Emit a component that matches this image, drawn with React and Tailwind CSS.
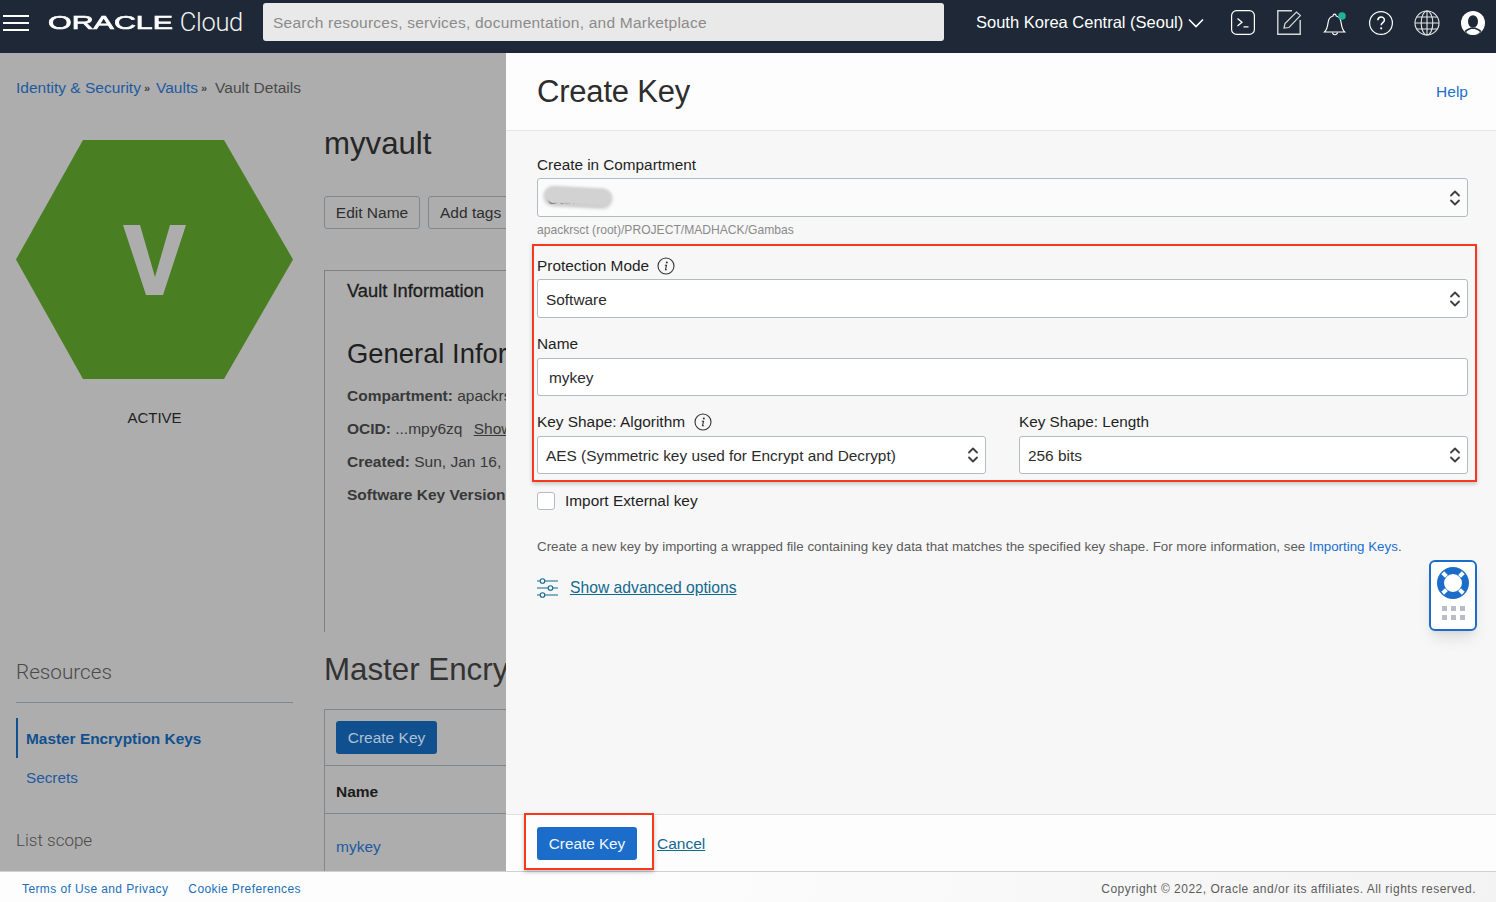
import React from 'react';

const Chevrons = () => (
    <svg width="12" height="18" viewBox="0 0 12 18" fill="none" stroke="#3f3f3f" strokeWidth="1.8" strokeLinecap="round" strokeLinejoin="round">
        <path d="M2 6.500 6 2.500l4 4" />
        <path d="M2 11.500l4 4 4-4" />
    </svg>
);

const InfoIcon = () => (
    <svg width="18" height="18" viewBox="0 0 18 18" fill="none">
        <circle cx="9" cy="9" r="8" stroke="#333" strokeWidth="1.100" />
        <circle cx="9.800" cy="5.400" r="1" fill="#333" />
        <path d="M7.800 8.200h1.700l-1 4.500h1.400" stroke="#333" strokeWidth="1.100" fill="none" />
    </svg>
);

const SelectBox = ({ children, className = '' }) => (
    <div className={`flex items-center justify-between rounded-[3px] border border-[#b5b9c2] bg-white pl-2 pr-[6px] text-[15.400px] text-[#2c2c2c] ${className}`}>
        <span className="pt-[2px]">{children}</span>
        <Chevrons />
    </div>
);

const HeaderIcons = () => (
    <div className="flex items-center gap-[22px] text-white">
        <svg width="24" height="25" viewBox="0 0 24 25" fill="none" stroke="currentColor">
            <rect x="0.600" y="0.600" width="22.800" height="23.800" rx="5" strokeWidth="1.200" />
            <path d="M6.500 8.500l4.500 3.800-4.500 3.800M12.500 16.900h5" strokeWidth="1.300" />
        </svg>
        <svg width="24" height="25" viewBox="0 0 24 25" fill="none" stroke="#d8d8d8">
            <path d="M15 0.800H0.800v23.400h22.400V10" strokeWidth="1.400" />
            <path d="M7 18l1-4.500L19.500 2l4 3.500L12 17.500l-5 .5z" strokeWidth="1.200" fill="#1e2836" />
        </svg>
        <svg width="24" height="26" viewBox="0 0 24 26" fill="none" stroke="currentColor">
            <path d="M1.500 22c2.500-2.500 3-5 3.500-9 .4-4 3-6.500 5-7 .2-2.500 3-2.500 3.200 0 2 .5 4.500 3 5 7 .5 4 1 6.500 3.500 9z" strokeWidth="1.200" />
            <path d="M9.500 22.500c.3 3 4.500 3 5 0" strokeWidth="1.200" />
            <circle cx="19" cy="6" r="3.800" fill="#1db299" stroke="none" />
        </svg>
        <svg width="24" height="24" viewBox="0 0 24 24" fill="none" stroke="currentColor">
            <circle cx="12" cy="12" r="11.400" strokeWidth="1.200" />
            <path d="M8.800 9.300c.2-4.300 6.600-4.300 6.600-.3 0 2.700-3.200 2.600-3.200 5.300" strokeWidth="1.500" />
            <circle cx="12.200" cy="17.300" r="1.100" fill="currentColor" stroke="none" />
        </svg>
        <svg width="26" height="26" viewBox="0 0 26 26" fill="none" stroke="#e5e5e5" strokeWidth="1.100" className="-mx-px">
            <circle cx="13" cy="13" r="12" />
            <ellipse cx="13" cy="13" rx="5.800" ry="12" />
            <path d="M13 1v24M1 13h24M2.800 7h20.400M2.800 19h20.400" />
        </svg>
        <svg width="24" height="24" viewBox="0 0 24 24">
            <circle cx="12" cy="12" r="12" fill="#fff" />
            <ellipse cx="12" cy="10.500" rx="5" ry="6.200" fill="#1e2836" />
            <path d="M3.500 20c2.500-2.500 5.500-2.800 6-3.500h5c.5.700 3.500 1 6 3.500l-3 2.500H6z" fill="#1e2836" />
            <path d="M5 21c2-2 4-2.300 5-3h4c1 .7 3 1 5 3-4 3.500-10 3.500-14 0z" fill="#fff" />
        </svg>
    </div>
);

const Header = () => (
    <header className="flex h-[53px] shrink-0 items-center bg-[#1e2836] pb-2 pl-[3px] pr-[11px] text-white">
        <div className="flex w-[26px] flex-col gap-[5px]">
            <div className="h-[2px] bg-white" />
            <div className="h-[2px] bg-white" />
            <div className="h-[2px] bg-white" />
        </div>
        <div className="ml-[19px] flex w-[195px] items-center">
            <span className="w-[134px] origin-left scale-x-[1.6] whitespace-nowrap text-[19px] leading-none [-webkit-text-stroke:0.7px_white]">ORACLE</span>
            <span className="font-['Roboto',sans-serif] text-[25.500px] font-light leading-none tracking-[-0.3px] text-[#f2f2f2]">Cloud</span>
        </div>
        <div className="ml-[20px] -mt-[1px] flex h-[38px] w-[681px] items-center rounded-[3px] bg-[#e9e9e9] px-[10px] pt-[1px] text-[15.500px] tracking-[0.23px] text-[#8b8b8b]">
            Search resources, services, documentation, and Marketplace
        </div>
        <span className="ml-[32px] whitespace-nowrap text-[16.500px]">South Korea Central (Seoul)</span>
        <svg width="16" height="10" viewBox="0 0 16 10" fill="none" stroke="currentColor" strokeWidth="1.600" className="ml-[5px] mt-[1px]">
            <path d="M1 1.500 8 8.500l7-7" />
        </svg>
        <div className="ml-auto">
            <HeaderIcons />
        </div>
    </header>
);

const Sidebar = () => (
    <aside className="flex w-[277px] shrink-0 flex-col">
        <svg width="277" height="239" viewBox="0 0 277 239" className="mt-[2px]">
            <polygon points="67,0 208,0 277,119.500 208,239 67,239 0,119.500" fill="#4a7e22" />
            <path d="M107 85h17l15 52 15-52h16l-23 70h-17z" fill="#adadad" />
        </svg>
        <div className="mt-[29px] text-center text-[15px] leading-5 text-[#1f1f1f]">ACTIVE</div>
        <div className="mt-[232px] font-['Roboto',sans-serif] text-[20.700px] font-light leading-6 text-[#4a4a4a]">Resources</div>
        <div className="mt-[18px] border-t border-[#7f8791]" />
        <div className="mt-[15px] flex h-10 items-center border-l-2 border-[#11508f] pl-2 pt-[2px] text-[15.400px] font-bold text-[#11508f]">
            Master Encryption Keys
        </div>
        <div className="mt-2 pl-[10px] text-[15.300px] leading-6 text-[#1e5aa0]">Secrets</div>
        <div className="mt-[38px] font-['Roboto',sans-serif] text-[17px] font-light leading-6 text-[#4a4a4a]">List scope</div>
    </aside>
);

const Details = () => (
    <div className="ml-[31px] w-[400px] shrink-0">
        <h1 className="-mt-[14px] text-[31.200px] leading-10 text-[#262626]">myvault</h1>
        <div className="mt-[32px] flex gap-2 text-[15.500px] text-[#2e2e2e]">
            <div className="flex h-[33px] w-[96px] items-center justify-center rounded-[3px] border border-[#7f8791]">Edit Name</div>
            <div className="flex h-[33px] w-[100px] items-center rounded-[3px] border border-[#7f8791] pl-[11px]">Add tags</div>
        </div>
        <section className="mt-[41px] h-[362px] border-l border-t border-[#7f8080] pl-[22px] pt-[8px]">
            <div className="text-[18.300px] leading-6 text-[#1c1c1c] [-webkit-text-stroke:0.3px_#1c1c1c]">Vault Information</div>
            <div className="mt-[33px] whitespace-nowrap text-[27.400px] leading-9 text-[#1f1f1f]">General Information</div>
            <div className="mt-[14px] flex flex-col gap-[13px] whitespace-nowrap text-[15.500px] leading-5 text-[#383838]">
                <div><b>Compartment:</b> apackrsct</div>
                <div><b>OCID:</b> ...mpy6zq <span className="ml-[7px] underline">Show</span></div>
                <div><b>Created:</b> Sun, Jan 16, 2022</div>
                <div><b>Software Key Version</b></div>
            </div>
        </section>
        <h2 className="mt-[18px] whitespace-nowrap text-[31.300px] leading-10 text-[#333]">Master Encryption Keys</h2>
        <section className="mt-[19px] h-[200px] border-l border-t border-[#7f8791]">
            <div className="flex h-[56px] items-center border-b border-[#7f8791] pl-[11px]">
                <div className="flex h-[33px] w-[101px] items-center justify-center rounded-[3px] bg-[#11508f] text-[15.500px] text-[#adc0d6]">Create Key</div>
            </div>
            <div className="flex h-[48px] items-center border-b border-[#7f8791] pl-[11px] pt-1 text-[15.500px] font-bold text-[#1c1c1c]">Name</div>
            <div className="pl-[11px] pt-[23px] text-[15.500px] leading-5 text-[#1e5aa0]">mykey</div>
        </section>
    </div>
);

const CreateKeyPanel = () => (
    <div className="relative flex w-[990px] shrink-0 flex-col bg-[#f7f7f7]">
        <div className="flex h-[78px] shrink-0 items-center justify-between border-b border-[#e6e6e6] bg-[#fdfdfd] pl-[31px] pr-[28px]">
            <h2 className="text-[31px] leading-10 tracking-[-0.2px] text-[#2d2d2d]">Create Key</h2>
            <span className="text-[15.500px] text-[#1b6fd0]">Help</span>
        </div>

        <div className="flex-1 pl-[31px] pr-[28px] pt-[24px]">
            <div className="text-[15.300px] leading-5 text-[#1f1f1f]">Create in Compartment</div>
            <SelectBox className="mt-[3px] h-[39px] !bg-[#fbfbfb]">
                <span className="ml-[1px] text-[#333]">Gam</span>
            </SelectBox>
            <div className="mt-[5px] text-[12.100px] leading-4 text-[#8a8a8a]">apackrsct (root)/PROJECT/MADHACK/Gambas</div>

            <div className="mt-[18px] flex h-5 items-center gap-2 text-[15.400px] text-[#1f1f1f]">
                Protection Mode <InfoIcon />
            </div>
            <SelectBox className="mt-[3px] h-[39px]">Software</SelectBox>

            <div className="mt-4 text-[15.400px] leading-5 text-[#1f1f1f]">Name</div>
            <div className="mt-[4px] flex h-[38px] items-center rounded-[3px] border border-[#b5b9c2] bg-white pl-[11px] pt-[2px] text-[15.400px] text-[#2c2c2c]">mykey</div>

            <div className="mt-4 flex gap-[33px]">
                <div className="w-[449px]">
                    <div className="flex h-5 items-center gap-[9px] text-[15.400px] text-[#1f1f1f]">
                        Key Shape: Algorithm <InfoIcon />
                    </div>
                    <SelectBox className="mt-[4px] h-[38px]">AES (Symmetric key used for Encrypt and Decrypt)</SelectBox>
                </div>
                <div className="flex-1">
                    <div className="text-[15.300px] leading-5 text-[#1f1f1f]">Key Shape: Length</div>
                    <SelectBox className="mt-[4px] h-[38px]">256 bits</SelectBox>
                </div>
            </div>

            <label className="mt-[18px] flex h-[18px] items-center gap-[10px] text-[15.400px] text-[#1f1f1f]">
                <span className="h-[18px] w-[18px] rounded-[3px] border border-[#b5b9c2] bg-white" />
                Import External key
            </label>

            <p className="mt-[27px] text-[13.330px] leading-5 text-[#5c5c5c]">
                Create a new key by importing a wrapped file containing key data that matches the specified key shape. For more information, see <span className="text-[#1b6fd0]">Importing Keys</span>.
            </p>

            <div className="mt-[21px] flex items-center gap-[12px]">
                <svg width="21" height="20" viewBox="0 0 21 20" fill="none" stroke="#136a8f" strokeWidth="1.100">
                    <path d="M0 3h3M8 3h13M0 10h11M16 10h5M0 17h3M8 17h13" />
                    <circle cx="5.500" cy="3" r="2.300" />
                    <circle cx="13.500" cy="10" r="2.300" />
                    <circle cx="5.500" cy="17" r="2.300" />
                </svg>
                <span className="text-[15.700px] leading-5 text-[#136a8f] underline">Show advanced options</span>
            </div>
        </div>

        <div className="flex h-[57px] shrink-0 items-center border-t border-[#e2e2e2] bg-[#fdfdfd] pl-[31px]">
            <button className="h-[33px] w-[100px] rounded-[3px] bg-[#1b6dc9] pt-[2px] text-[15.300px] text-[#f2f6fb]">Create Key</button>
            <span className="ml-5 pt-[2px] text-[15.500px] text-[#136a8f] underline">Cancel</span>
        </div>

        {/* help widget floats over the form */}
        <div className="absolute left-[923px] top-[507px] flex h-[71px] w-[48px] flex-col items-center rounded-[6px] border-2 border-[#1b6dc9] bg-white pt-[4px] shadow-lg">
            <svg width="34" height="34" viewBox="0 0 34 34">
                <circle cx="17" cy="17" r="12.500" fill="none" stroke="#1b6dc9" strokeWidth="7" />
                <path d="M6.750 6.750l3.700 3.700M27.250 6.750l-3.700 3.700M6.750 27.250l3.700-3.700M27.250 27.250l-3.700-3.700" stroke="#fff" strokeWidth="4" />
            </svg>
            <div className="mt-[6px] grid grid-cols-3 gap-[4px]">
                {[0, 1, 2, 3, 4, 5].map((i) => (
                    <div key={i} className="h-[5px] w-[5px] bg-[#b9bec6]" />
                ))}
            </div>
        </div>

        {/* blurred redaction on the compartment value */}
        <div className="absolute left-[38px] top-[134px] h-[18px] w-[68px] rotate-[3deg] rounded-full bg-[#d2d2d2] shadow-[0_2px_3px_rgba(0,0,0,0.25)] blur-[1px]" />

        {/* red annotation boxes drawn on the screenshot */}
        <div className="absolute left-[26px] top-[191px] h-[238px] w-[945px] border-2 border-[#f5391f] shadow-[0_2px_4px_rgba(0,0,0,0.2)]" />
        <div className="absolute left-[18px] top-[760px] h-[57px] w-[130px] border-2 border-[#f5391f] shadow-[0_2px_4px_rgba(0,0,0,0.25)]" />
    </div>
);

const Footer = () => (
    <footer className="flex h-[31px] shrink-0 items-center justify-between border-t border-[#cfcfd4] bg-gradient-to-r from-[#fdfdfd] from-40% to-[#f3f3f3] pl-[22px] pr-[20px] pt-[3px] text-[12px]">
        <div className="flex gap-5 tracking-[0.4px] text-[#1b6fb8]">
            <span>Terms of Use and Privacy</span>
            <span>Cookie Preferences</span>
        </div>
        <span className="tracking-[0.5px] text-[#5c5c5c]">Copyright © 2022, Oracle and/or its affiliates. All rights reserved.</span>
    </footer>
);

const App = () => (
    <div className="flex h-[902px] w-[1496px] flex-col overflow-hidden font-['Liberation_Sans',Arial,sans-serif]">
        <Header />
        <main className="flex min-h-0 flex-1">
            <div className="w-[506px] shrink-0 overflow-hidden bg-[#adadad] pl-4">
                <div className="flex h-[45px] items-end gap-[3px] text-[15.500px] leading-5">
                    <span className="text-[#1e5aa0]">Identity &amp; Security</span>
                    <span className="text-[11px] font-bold text-[#444]">»</span>
                    <span className="ml-[3px] text-[#1e5aa0]">Vaults</span>
                    <span className="text-[11px] font-bold text-[#444]">»</span>
                    <span className="ml-[5px] text-[#4a4a4a]">Vault Details</span>
                </div>
                <div className="mt-[40px] flex">
                    <Sidebar />
                    <Details />
                </div>
            </div>
            <CreateKeyPanel />
        </main>
        <Footer />
    </div>
);

export default App;
